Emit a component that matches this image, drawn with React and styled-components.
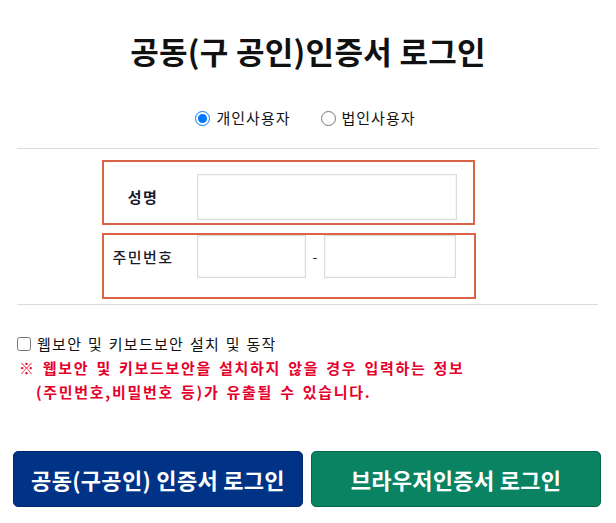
import styled, { createGlobalStyle } from "styled-components";

const GlobalStyle = createGlobalStyle`
  body {
    margin: 0;
    background: #fff;
    font-family: "Noto Sans CJK KR", "Noto Sans", sans-serif;
    color: #111;
  }
  * { box-sizing: border-box; }
`;

const Page = styled.div`
  width: 616px;
  padding-top: 31px;
`;

const Title = styled.h2`
  margin: 0;
  text-align: center;
  font-size: 31px;
  line-height: 40px;
  font-weight: 700;
  color: #111;
  letter-spacing: 0.3px;
`;

const RadioRow = styled.div`
  display: flex;
  justify-content: center;
  gap: 30px;
  margin-top: 37px;
  padding-right: 5px;
`;

const RadioLabel = styled.label`
  display: flex;
  align-items: center;
  gap: 6px;
  font-size: 15px;
  line-height: 20px;
  color: #111;
  letter-spacing: 1px;
`;

const Radio = styled.input`
  width: 15px;
  height: 15px;
  margin: 0;
`;

const Divider = styled.hr`
  border: 0;
  border-top: 1px solid #dcdcdc;
  margin: ${(p) => p.$top}px 18px 0 17px;
`;

const FormArea = styled.div`
  margin-top: 11px;
  margin-left: 102px;
  display: flex;
  flex-direction: column;
  gap: 8px;
`;

const FieldBox = styled.div`
  display: flex;
  align-items: ${(p) => (p.$top ? "flex-start" : "center")};
  width: ${(p) => p.$width}px;
  border: 2px solid #dc6446;
  padding: ${(p) => p.$pad};
`;

const FieldLabel = styled.div`
  width: 93px;
  padding-right: 15px;
  text-align: center;
  font-size: 15px;
  font-weight: ${(p) => (p.$bold ? 700 : 500)};
  letter-spacing: 1.5px;
  line-height: ${(p) => p.$lh}px;
  color: #1a1a2a;
`;

const TextInput = styled.input`
  width: ${(p) => p.$width}px;
  height: ${(p) => p.$height}px;
  border: 1px solid #dcdcdc;
  box-shadow: inset 0 0 3px #ececec;
  background: #fff;
  outline: none;
  margin: 0;
`;

const Dash = styled.span`
  width: 18px;
  text-align: center;
  font-size: 14px;
  line-height: 43px;
  color: #222;
`;

const CheckRow = styled.label`
  display: flex;
  align-items: center;
  gap: 6px;
  margin: 29px 0 0 17px;
  font-size: 15px;
  line-height: 20px;
  letter-spacing: 1.3px;
  word-spacing: 1px;
  color: #111;
`;

const Check = styled.input`
  width: 14px;
  height: 14px;
  margin: 0;
`;

const Warning = styled.p`
  margin: 2px 0 0 19px;
  color: #e5002b;
  font-size: 15px;
  font-weight: 700;
  line-height: 24px;
  letter-spacing: 1.7px;
  word-spacing: 2px;
`;

const Indent = styled.span`
  display: block;
  padding-left: 17px;
`;

const ButtonRow = styled.div`
  display: flex;
  gap: 8px;
  margin: 47px 0 0 13px;
`;

const Button = styled.button`
  width: 290px;
  height: 56px;
  border: 1px solid ${(p) => p.$border};
  border-radius: 5px;
  background: ${(p) => p.$bg};
  color: #fff;
  font-family: inherit;
  font-size: 22px;
  font-weight: 700;
  letter-spacing: 0.3px;
  cursor: pointer;
`;

export default function App() {
  return (
    <Page>
      <GlobalStyle />
      <Title>공동(구 공인)인증서 로그인</Title>
      <RadioRow>
        <RadioLabel>
          <Radio type="radio" name="userType" defaultChecked />
          개인사용자
        </RadioLabel>
        <RadioLabel>
          <Radio type="radio" name="userType" />
          법인사용자
        </RadioLabel>
      </RadioRow>
      <Divider $top={20} />
      <FormArea>
        <FieldBox $width={373} $pad="12px 0 3px 0">
          <FieldLabel $bold $lh={46}>성명</FieldLabel>
          <TextInput type="text" $width={260} $height={46} />
        </FieldBox>
        <FieldBox $width={374} $pad="0 0 19px 0" $top>
          <FieldLabel $lh={43}>주민번호</FieldLabel>
          <TextInput type="text" $width={109} $height={43} />
          <Dash>-</Dash>
          <TextInput type="password" $width={132} $height={43} />
        </FieldBox>
      </FormArea>
      <Divider $top={5} />
      <CheckRow>
        <Check type="checkbox" />
        웹보안 및 키보드보안 설치 및 동작
      </CheckRow>
      <Warning>
        ※ 웹보안 및 키보드보안을 설치하지 않을 경우 입력하는 정보
        <Indent>(주민번호,비밀번호 등)가 유출될 수 있습니다.</Indent>
      </Warning>
      <ButtonRow>
        <Button $bg="#003286" $border="#002a70">공동(구공인) 인증서 로그인</Button>
        <Button $bg="#0a8363" $border="#07664c">브라우저인증서 로그인</Button>
      </ButtonRow>
    </Page>
  );
}
